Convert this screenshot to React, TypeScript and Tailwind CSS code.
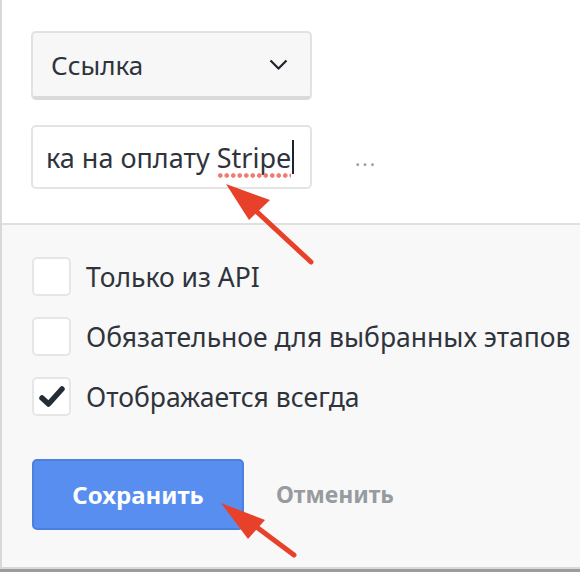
import React from "react";

const font = { fontFamily: '"Noto Sans", "Open Sans", sans-serif' };

function Checkbox({ checked }: { checked?: boolean }) {
  return (
    <div className="w-[39px] h-[39px] rounded-[5px] border-2 border-[#e6e6e6] bg-white flex items-center justify-center">
      {checked && (
        <svg width="28" height="24" viewBox="0 0 28 24">
          <path d="M4 13 L10.5 19 L24 4" fill="none" stroke="#262c36" strokeWidth="5.5" strokeLinecap="round" strokeLinejoin="round" />
        </svg>
      )}
    </div>
  );
}

function Row({ label, checked }: { label: string; checked?: boolean }) {
  return (
    <div className="flex items-center gap-[15px] h-[39px]">
      <Checkbox checked={checked} />
      <span className="text-[26.5px] text-[#2f343c] whitespace-nowrap leading-none mt-[2px]">{label}</span>
    </div>
  );
}

export default function App() {
  return (
    <div className="w-[580px] h-[572px] bg-[#9c9c9c] overflow-hidden relative" style={font}>
      <div className="h-[569px] border-l-2 border-b-2 border-[#d8d8d8] bg-[#f8f8f8] flex flex-col">
        <div className="h-[223px] bg-white pl-[29px] pt-[31px] flex flex-col gap-[25px]">
          <div className="w-[281px] h-[69px] rounded-[5px] border-2 border-[#e2e2e2] border-b-4 border-b-[#dadada] bg-[#f7f7f7] flex items-center justify-between pl-[18px] pr-[22px]">
            <span className="text-[26px] text-[#2f343c] leading-none">Ссылка</span>
            <svg width="19" height="12" viewBox="0 0 19 12">
              <path d="M1.5 1.5 L9.5 9.5 L17.5 1.5" fill="none" stroke="#1f232a" strokeWidth="2.2" />
            </svg>
          </div>
          <div className="flex items-center">
            <div className="w-[281px] h-[64px] rounded-[5px] border-2 border-[#e4e4e4] bg-white flex items-center pl-[13px] overflow-hidden">
              <span className="text-[27px] text-[#2f343c] leading-none whitespace-nowrap">
                ка на оплату{" "}
                <span className="relative">
                  Stripe
                  <span className="absolute left-0 right-0 -bottom-[2px] h-[5px] bg-[radial-gradient(circle,#ef7b72_2px,transparent_2.5px)] bg-[length:6.5px_5px] bg-repeat-x" />
                </span>
              </span>
              <span className="w-[2px] h-[34px] bg-[#1f232a] ml-[1px]" />
            </div>
            <span className="ml-[43px] text-[20px] text-[#9a9a9a] tracking-[2px] leading-none mt-[4px]">...</span>
          </div>
        </div>
        <div className="border-t-2 border-[#e0e0e0] pl-[30px] pt-[32px] flex flex-col gap-[21px]">
          <Row label="Только из API" />
          <Row label="Обязательное для выбранных этапов" />
          <Row label="Отображается всегда" checked />
        </div>
        <div className="pl-[30px] pt-[43px] flex items-center">
          <button className="w-[212px] h-[71px] rounded-[5px] bg-[#578ef0] border-2 border-[#4d80dd] text-white text-[24px] font-bold">
            Сохранить
          </button>
          <span className="ml-[32px] text-[#979b9f] text-[23px] font-bold">Отменить</span>
        </div>
      </div>
      <svg className="absolute left-0 top-0 pointer-events-none" width="580" height="572">
        <line x1="311" y1="262" x2="255" y2="210" stroke="#e8412a" strokeWidth="5" strokeLinecap="round" />
        <polygon points="226,184 270,200 249,220" fill="#e8412a" />
        <line x1="294" y1="555" x2="250" y2="522" stroke="#e8412a" strokeWidth="5" strokeLinecap="round" />
        <polygon points="221,503 265,520 248,539" fill="#e8412a" />
      </svg>
    </div>
  );
}
